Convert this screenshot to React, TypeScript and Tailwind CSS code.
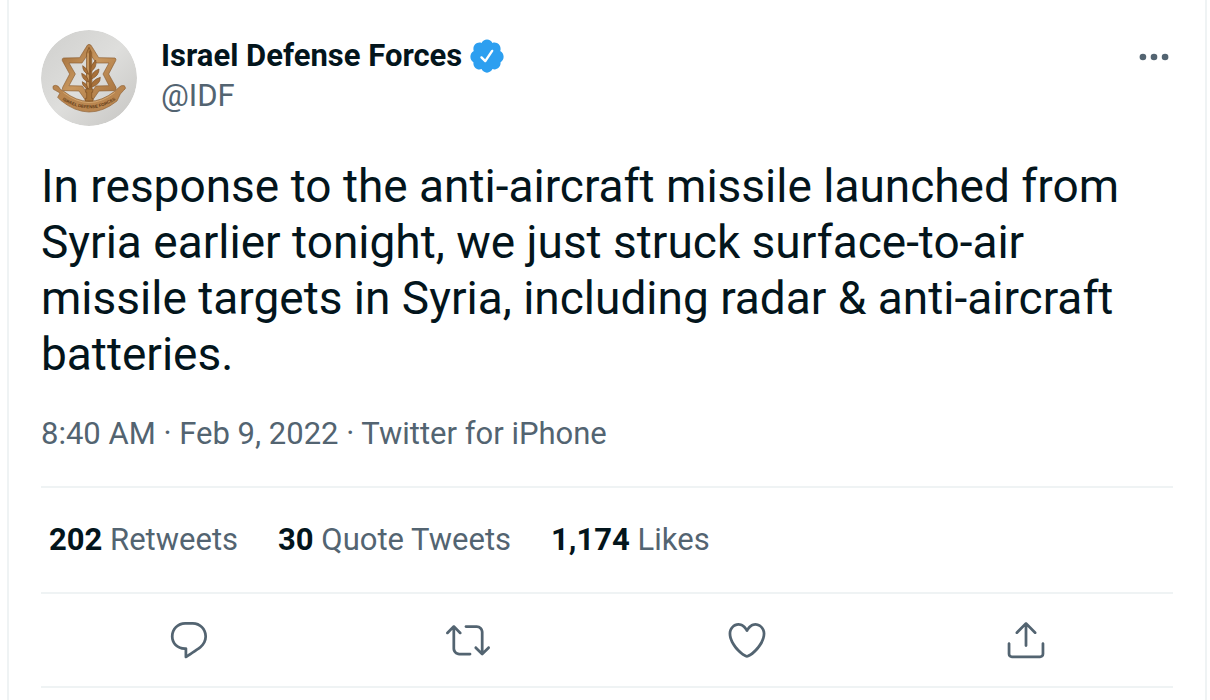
import type { ReactNode } from 'react';

const actions = [
  {
    id: 'reply',
    label: 'Reply',
    path: 'M14.046 2.242l-4.148-.01h-.002c-4.374 0-7.8 3.427-7.8 7.802 0 4.098 3.186 7.206 7.465 7.37v3.828c0 .108.044.286.12.403.142.225.384.347.632.347.138 0 .277-.038.402-.118.264-.168 6.473-4.14 8.088-5.506 1.902-1.61 3.04-3.97 3.043-6.312v-.017c-.006-4.367-3.43-7.787-7.8-7.788zm3.787 12.972c-1.134.96-4.862 3.405-6.772 4.643V16.67c0-.414-.335-.75-.75-.75h-.396c-3.66 0-6.318-2.476-6.318-5.886 0-3.534 2.768-6.302 6.3-6.302l4.147.01h.002c3.532 0 6.3 2.766 6.302 6.296-.003 1.91-.942 3.844-2.514 5.176z',
  },
  {
    id: 'retweet',
    label: 'Retweet',
    path: 'M23.77 15.67c-.292-.293-.767-.293-1.06 0l-2.22 2.22V7.65c0-2.068-1.683-3.75-3.75-3.75h-5.85c-.414 0-.75.336-.75.75s.336.75.75.75h5.85c1.24 0 2.25 1.01 2.25 2.25v10.24l-2.22-2.22c-.293-.293-.768-.293-1.06 0s-.294.768 0 1.06l3.5 3.5c.145.147.337.22.53.22s.383-.072.53-.22l3.5-3.5c.294-.292.294-.767 0-1.06zm-10.66 3.28H7.26c-1.24 0-2.25-1.01-2.25-2.25V6.46l2.22 2.22c.148.147.34.22.532.22s.384-.073.53-.22c.293-.293.293-.768 0-1.06l-3.5-3.5c-.293-.294-.768-.294-1.06 0l-3.5 3.5c-.294.292-.294.767 0 1.06s.767.293 1.06 0l2.22-2.22V16.7c0 2.068 1.683 3.75 3.75 3.75h5.85c.414 0 .75-.336.75-.75s-.337-.75-.75-.75z',
  },
  {
    id: 'like',
    label: 'Like',
    path: 'M12 21.638h-.014C9.403 21.59 1.95 14.856 1.95 8.478c0-3.064 2.525-5.754 5.403-5.754 2.29 0 3.83 1.58 4.646 2.73.814-1.148 2.354-2.73 4.645-2.73 2.88 0 5.404 2.69 5.404 5.755 0 6.376-7.454 13.11-10.037 13.157H12zM7.354 4.225c-2.08 0-3.903 1.988-3.903 4.255 0 5.74 7.034 11.596 8.55 11.658 1.518-.062 8.55-5.917 8.55-11.658 0-2.267-1.823-4.255-3.903-4.255-2.528 0-3.94 2.936-3.952 2.965-.23.562-1.156.562-1.387 0-.014-.03-1.425-2.965-3.954-2.965z',
  },
  {
    id: 'share',
    label: 'Share',
    path: 'M17.53 7.47l-5-5c-.293-.293-.768-.293-1.06 0l-5 5c-.294.293-.294.768 0 1.06s.767.294 1.06 0l3.72-3.72V15c0 .414.336.75.75.75s.75-.336.75-.75V4.81l3.72 3.72c.146.147.338.22.53.22s.384-.072.53-.22c.293-.293.293-.767 0-1.06z M19.708 21.944H4.292C3.028 21.944 2 20.916 2 19.652V14c0-.414.336-.75.75-.75s.75.336.75.75v5.652c0 .437.355.792.792.792h15.416c.437 0 .792-.355.792-.792V14c0-.414.336-.75.75-.75s.75.336.75.75v5.652c0 1.264-1.028 2.292-2.292 2.292z',
  },
];

const stats = [
  { count: '202', label: 'Retweets' },
  { count: '30', label: 'Quote Tweets' },
  { count: '1,174', label: 'Likes' },
];

function Icon({ className, children }: { className: string; children: ReactNode }) {
  return (
    <svg viewBox="0 0 24 24" fill="currentColor" aria-hidden="true" className={className}>
      {children}
    </svg>
  );
}

function Avatar() {
  return (
    <svg viewBox="33 30 288 288" aria-hidden="true" className="size-24 shrink-0 rounded-full">
      <defs>
        <linearGradient id="backdrop" x1="0" y1="0" x2="1" y2="1">
          <stop offset="0" stopColor="#cfcfcd" />
          <stop offset="0.5" stopColor="#dededc" />
          <stop offset="1" stopColor="#c6c5c2" />
        </linearGradient>
        <linearGradient id="bronze" x1="0" y1="0" x2="1" y2="1">
          <stop offset="0" stopColor="#a06c38" />
          <stop offset="0.45" stopColor="#c8975f" />
          <stop offset="1" stopColor="#a26d39" />
        </linearGradient>
        <path id="ribbon-line" d="M86 232Q177 298 268 232" />
      </defs>
      <circle cx="177" cy="174" r="144" fill="url(#backdrop)" />

      {/* star */}
      <path
        fill="url(#bronze)"
        stroke="#8d5f34"
        strokeWidth="2"
        strokeLinejoin="round"
        fillRule="evenodd"
        d="M177 73Q183 73 187 82L206 113L255 114Q260 116 257 122L236 162L258 202Q260 210 253 212L207 213L177 256L147 213L101 212Q95 209 98 202L119 162L97 122Q95 115 101 114L149 113L168 82Q172 73 177 73ZM177 98L156 129L117 129L136 162L117 197L157 198L177 228L198 198L237 197L219 162L237 129L199 129Z"
      />

      {/* sword */}
      <path
        fill="#b07c42"
        stroke="#7c4e22"
        strokeWidth="2"
        d="M177 82L185 98L186 208H169L170 98Z"
      />
      <path stroke="#6f431b" strokeWidth="3" fill="none" d="M180 92V204" />
      <path stroke="#dcb07a" strokeWidth="3" fill="none" d="M174 100V204" />

      {/* olive branch */}
      <g fill="#a8713a" stroke="#7f5024" strokeWidth="2">
        <path d="M181 156Q180 136 197 120Q203 142 181 156Z" />
        <path d="M183 178Q184 155 207 147Q208 167 183 178Z" />
        <path d="M183 202Q184 180 211 172Q211 194 183 202Z" />
        <path d="M176 163Q158 157 158 137Q173 145 176 163Z" />
        <path d="M176 186Q156 180 155 160Q173 167 176 186Z" />
        <path d="M175 207Q156 200 157 185Q171 190 175 207Z" />
      </g>

      {/* ribbon */}
      <path
        fill="#b98650"
        stroke="#8f6033"
        strokeWidth="2"
        strokeLinejoin="round"
        d="M69 204Q67 196 76 196Q86 196 90 207L100 213Q177 275 255 213L266 203Q273 194 283 197Q291 205 281 211L271 222L261 243Q177 310 92 241L83 232L90 219L76 211Q69 209 69 204Z"
      />
      <path fill="none" stroke="#e0b680" strokeWidth="2" d="M100 217Q177 278 255 217" />
      <text fontSize="13" fontFamily="Liberation Sans, sans-serif" fontWeight="bold" fill="#5f3a17">
        <textPath href="#ribbon-line" startOffset="50%" textAnchor="middle">
          ISRAEL DEFENSE FORCES
        </textPath>
      </text>
      <path
        fill="#a97439"
        stroke="#7c4e22"
        strokeWidth="2"
        d="M167 207H188V217H185V235H189V243H166V235H170V217H167Z"
      />
    </svg>
  );
}

export default function App() {
  return (
    <main className="min-h-screen bg-white pr-[3px] pl-[7px] font-['Roboto',sans-serif] text-[#03151c]">
      <article className="min-h-screen border-x-2 border-[#eff3f4] px-8 pt-[30px]">
        <header className="flex items-start gap-6">
          <Avatar />
          <div className="min-w-0 flex-1 pt-1.5 text-[31px] leading-10">
            <div className="flex items-center gap-1.5">
              <a href="#profile" className="font-bold">
                Israel Defense Forces
              </a>
              <Icon className="size-[38px] text-[#2d9ff0]">
                <path d="M22.5 12.5c0-1.58-.875-2.95-2.148-3.6.154-.435.238-.905.238-1.4 0-2.21-1.71-3.998-3.818-3.998-.47 0-.92.084-1.336.25C14.818 2.415 13.51 1.5 12 1.5s-2.816.917-3.437 2.25c-.415-.165-.866-.25-1.336-.25-2.11 0-3.818 1.79-3.818 4 0 .494.083.964.237 1.4-1.272.65-2.147 2.018-2.147 3.6 0 1.495.782 2.798 1.942 3.486-.02.17-.032.34-.032.514 0 2.21 1.708 4 3.818 4 .47 0 .92-.086 1.335-.25.62 1.334 1.926 2.25 3.437 2.25 1.512 0 2.818-.916 3.437-2.25.415.163.865.248 1.336.248 2.11 0 3.818-1.79 3.818-4 0-.174-.012-.344-.033-.513 1.158-.687 1.943-1.99 1.943-3.484zm-6.616-3.334l-4.334 6.5c-.145.217-.382.334-.625.334-.143 0-.288-.04-.416-.126l-.115-.094-2.415-2.415c-.293-.293-.293-.768 0-1.06s.768-.294 1.06 0l1.77 1.767 3.825-5.74c.23-.345.696-.436 1.04-.207.346.23.44.696.21 1.04z" />
              </Icon>
            </div>
            <a href="#profile" className="block text-[#536471]">
              @IDF
            </a>
          </div>
          <button type="button" aria-label="More" className="pt-2 text-[#536471]">
            <Icon className="size-[38px]">
              <circle cx="5" cy="12" r="2.1" />
              <circle cx="12" cy="12" r="2.1" />
              <circle cx="19" cy="12" r="2.1" />
            </Icon>
          </button>
        </header>

        <p className="mt-8 text-[46px] leading-14">
          In response to the anti-aircraft missile launched from Syria earlier tonight, we just struck
          surface-to-air missile targets in Syria, including radar &amp; anti-aircraft batteries.
        </p>

        <div className="border-b-2 border-[#eff3f4] py-8 text-[31px] leading-10 text-[#536471]">
          <a href="#status">8:40 AM · Feb 9, 2022</a> · <a href="#source">Twitter for iPhone</a>
        </div>

        <div className="flex gap-10 border-b-2 border-[#eff3f4] px-2 py-8 text-[31px] leading-10">
          {stats.map((stat) => (
            <a key={stat.label} href="#stats" className="text-[#536471]">
              <span className="font-bold text-[#03151c]">{stat.count}</span> {stat.label}
            </a>
          ))}
        </div>

        <div className="flex border-b-2 border-[#eff3f4] px-2 py-6 text-[#536471]">
          {actions.map((action) => (
            <div key={action.id} className="flex flex-1 justify-center">
              <button type="button" aria-label={action.label}>
                <Icon className="size-11">
                  <path d={action.path} />
                </Icon>
              </button>
            </div>
          ))}
        </div>
      </article>
    </main>
  );
}
